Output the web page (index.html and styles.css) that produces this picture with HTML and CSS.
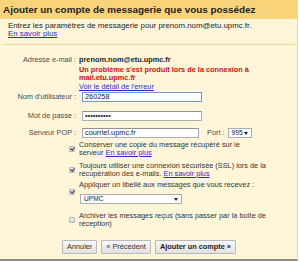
FILE: index.html
```html
<!DOCTYPE html>
<html lang="fr">
<head>
    <meta charset="UTF-8">
    <meta name="viewport" content="width=device-width, initial-scale=1.0">
    <title>Ajouter un compte de messagerie</title>
    <link rel="stylesheet" href="styles.css">
</head>
<body>
    <div class="dialog">
        <div class="title">Ajouter un compte de messagerie que vous possédez</div>
        <div class="intro">
            Entrez les paramètres de messagerie pour prenom.nom@etu.upmc.fr.<br>
            <a href="#">En savoir plus</a>
        </div>

        <div class="form">
            <div class="row">
                <div class="label">Adresse e-mail :</div>
                <div class="field">
                    <div class="email">prenom.nom@etu.upmc.fr</div>
                    <div class="error">Un problème s'est produit lors de la connexion à<br>mail.etu.upmc.fr</div>
                    <a class="detail" href="#">Voir le détail de l'erreur</a>
                </div>
            </div>

            <div class="row row-input first">
                <label class="label" for="user">Nom d'utilisateur :</label>
                <input class="text focus" type="text" id="user" value="260258">
            </div>

            <div class="row row-input">
                <label class="label" for="pass">Mot de passe :</label>
                <input class="text" type="password" id="pass" value="abcdefghij">
            </div>

            <div class="row row-input pop">
                <label class="label" for="pop">Serveur POP :</label>
                <input class="text narrow" type="text" id="pop" value="courriel.upmc.fr">
                <span class="port">Port :</span>
                <span class="select port-select">995<i class="arrow"></i></span>
            </div>

            <div class="row row-check cb1">
                <div class="label"><span class="cb checked"></span></div>
                <div class="field">Conserver une copie du message récupéré sur le<br>serveur <a href="#">En savoir plus</a></div>
            </div>

            <div class="row row-check cb2">
                <div class="label"><span class="cb checked"></span></div>
                <div class="field">Toujours utiliser une connexion sécurisée (SSL) lors de la<br>récupération des e-mails. <a href="#">En savoir plus</a></div>
            </div>

            <div class="row row-check cb3">
                <div class="label"><span class="cb checked"></span></div>
                <div class="field">
                    Appliquer un libellé aux messages que vous recevez :
                    <span class="select label-select">UPMC<i class="arrow"></i></span>
                </div>
            </div>

            <div class="row row-check cb4">
                <div class="label"><span class="cb"></span></div>
                <div class="field">Archiver les messages reçus (sans passer par la boîte de<br>réception)</div>
            </div>
        </div>

        <div class="buttons">
            <button>Annuler</button>
            <button>« Précédent</button>
            <button class="primary">Ajouter un compte »</button>
        </div>
    </div>
</body>
</html>
```

FILE: styles.css
```css
body {
    margin: 0;
    background: #ffffff;
    font-family: "Liberation Sans", Arial, sans-serif;
    color: #222222;
}

.dialog {
    width: 298px;
    height: 261px;
    background: #fff6da;
    border-right: 1px solid #e6d9b3;
    border-bottom: 2px solid #8c8c8c;
    box-sizing: border-box;
}

.title {
    height: 19px;
    background: #f8d37a;
    padding-left: 3px;
    font-size: 9.9px;
    font-weight: bold;
    line-height: 19px;
    color: #222222;
    white-space: nowrap;
}

.intro {
    margin: 0 2px 0 3px;
    padding: 3px 0 5px 5px;
    border-bottom: 1px solid #f2d68c;
    font-size: 7.85px;
    line-height: 8.4px;
    white-space: nowrap;
}

a {
    color: #2a2acb;
    text-decoration: underline;
}

.form {
    padding-top: 11px;
    font-size: 7.35px;
    line-height: 8px;
    white-space: nowrap;
}

.row {
    display: flex;
}

.label {
    width: 77px;
    flex: none;
    padding-right: 1px;
    box-sizing: border-box;
    text-align: right;
    color: #4a4a4a;
}

.field {
    padding-left: 2px;
}

.email {
    font-weight: bold;
    color: #222222;
}

.error {
    margin-top: 2px;
    font-weight: bold;
    color: #cc1111;
}

.detail {
    display: inline-block;
    margin-top: 1px;
}

.row-input {
    align-items: center;
    margin-top: 9px;
}

.row-input.first {
    margin-top: 1px;
}

.row-input.pop {
    margin-top: 7px;
}

.text {
    flex: none;
    width: 120px;
    height: 10px;
    margin: 0 0 0 5px;
    padding: 0 2px;
    border: 1px solid #a9aeb5;
    border-top-color: #8e939a;
    box-sizing: border-box;
    background: #ffffff;
    font-family: "Liberation Sans", Arial, sans-serif;
    font-size: 7.35px;
    color: #222222;
    outline: none;
}

.text.focus {
    border-color: #6e9ad3;
}

.text.narrow {
    width: 117px;
}

.port {
    flex: none;
    margin-left: 8px;
    color: #4a4a4a;
}

.select {
    position: relative;
    display: inline-block;
    height: 10px;
    padding: 0 0 0 3px;
    border: 1px solid #a9aeb5;
    box-sizing: border-box;
    background: #ffffff;
    font-size: 6.6px;
    line-height: 8px;
    color: #222222;
}

.port-select {
    flex: none;
    width: 24px;
    margin-left: 3px;
}

.label-select {
    display: block;
    width: 102px;
    margin: 5px 0 0 1px;
}

.arrow {
    position: absolute;
    right: 3px;
    top: 3px;
    border-left: 2px solid transparent;
    border-right: 2px solid transparent;
    border-top: 3px solid #222222;
}

.row-check {
    align-items: center;
}

.cb {
    display: inline-block;
    width: 6px;
    height: 6px;
    margin-right: 1px;
    border: 1px solid #b8b8b8;
    border-radius: 1px;
    box-sizing: border-box;
    background: linear-gradient(#f2f2f2, #d2d2d2);
    vertical-align: middle;
    position: relative;
}

.cb.checked::after {
    content: "";
    position: absolute;
    left: 1px;
    top: -1px;
    width: 1.5px;
    height: 3px;
    border-right: 1.2px solid #333333;
    border-bottom: 1.2px solid #333333;
    transform: rotate(40deg);
}

.row-check .field {
    color: #333333;
}

.cb1 {
    margin-top: 3px;
}

.cb2 {
    margin-top: 5px;
}

.cb3 {
    margin-top: 3px;
}

.cb4 {
    margin-top: 8px;
}

.buttons {
    display: flex;
    gap: 4px;
    padding-left: 62px;
    margin-top: 12px;
}

button {
    height: 14px;
    padding: 0 4px;
    border: 1px solid #b9b9b9;
    border-radius: 1px;
    background: linear-gradient(#f7f7f7, #e2e2e2);
    font-family: "Liberation Sans", Arial, sans-serif;
    font-size: 7.35px;
    color: #333333;
}

button.primary {
    font-weight: bold;
    color: #222222;
}
```
